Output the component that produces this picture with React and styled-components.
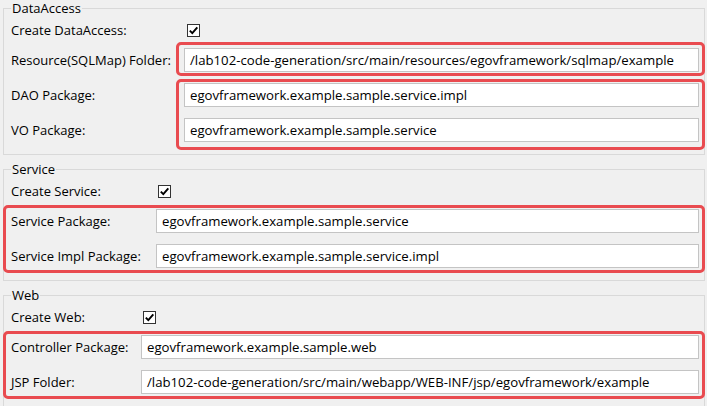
import React from "react";
import styled, { createGlobalStyle } from "styled-components";

const Global = createGlobalStyle`
  html, body { margin: 0; padding: 0; background: #f0f0f0; }
  body { font-family: "Open Sans", "Noto Sans", sans-serif; font-size: 12px; color: #000; overflow: hidden; }
`;

const Page = styled.div`
  display: flex;
  flex-direction: column;
  gap: 6px;
  padding: 0 2px 0 3px;
`;

const Group = styled.fieldset`
  margin: 0;
  min-width: 0;
  border: 1px solid #d9d9d9;
  padding: 7px 5px 12px 7px;
`;

const Legend = styled.legend`
  padding: 0 1px;
  margin-left: 0;
  line-height: 17px;
  font-size: 13px;
  color: #000;
`;

const Form = styled.div`
  display: grid;
  grid-template-columns: ${(p) => p.$labelCol}px 1fr;
  grid-template-rows: 13px;
  grid-auto-rows: 24px;
  row-gap: 11px;
  align-items: center;
`;

const Label = styled.div`
  grid-column: 1;
  grid-row: ${(p) => p.$row};
  font-size: 13px;
  line-height: 17px;
  white-space: nowrap;
  color: #000;
`;

const Field = styled.div`
  grid-column: 2;
  grid-row: ${(p) => p.$row};
  height: 24px;
  box-sizing: border-box;
  background: #fff;
  border: 1px solid #c4c4c4;
  padding: 0 5px;
  display: flex;
  align-items: center;
  font-size: 13.2px;
  white-space: nowrap;
  overflow: hidden;
  color: #000;
`;

const Check = styled.div`
  grid-column: 2;
  grid-row: 1;
  width: 13px;
  height: 13px;
  box-sizing: border-box;
  margin-left: ${(p) => p.$inset}px;
  border: 1px solid #333;
  background: #fff;
  display: flex;
  align-items: center;
  justify-content: center;
`;

const Highlight = styled.div`
  grid-column: ${(p) => p.$col};
  grid-row: ${(p) => p.$row};
  align-self: stretch;
  margin: ${(p) => p.$m};
  border: 3px solid #e94b50;
  border-radius: 5px;
  pointer-events: none;
  z-index: 2;
`;

function Tick() {
  return (
    <svg width="11" height="11" viewBox="0 0 11 11">
      <path d="M1.8 5.6 L4.3 8.2 L9.3 2.4" fill="none" stroke="#000" strokeWidth="1.9" />
    </svg>
  );
}

function Row({ row, label, value }) {
  return (
    <>
      <Label $row={row}>{label}</Label>
      <Field $row={row}>{value}</Field>
    </>
  );
}

export default function App() {
  return (
    <>
      <Global />
      <Page>
        <Group>
          <Legend>DataAccess</Legend>
          <Form $labelCol={173}>
            <Label $row={1}>Create DataAccess:</Label>
            <Check $inset={3}><Tick /></Check>
            <Row row={2} label="Resource(SQLMap) Folder:" value="/lab102-code-generation/src/main/resources/egovframework/sqlmap/example" />
            <Row row={3} label="DAO Package:" value="egovframework.example.sample.service.impl" />
            <Row row={4} label="VO Package:" value="egovframework.example.sample.service" />
            <Highlight $col="2" $row="2" $m="-6px -6px -4px -8px" />
            <Highlight $col="2" $row="3 / 5" $m="-4px -6px -8px -8px" />
          </Form>
        </Group>
        <Group>
          <Legend>Service</Legend>
          <Form $labelCol={145}>
            <Label $row={1}>Create Service:</Label>
            <Check $inset={2}><Tick /></Check>
            <Row row={2} label="Service Package:" value="egovframework.example.sample.service" />
            <Row row={3} label="Service Impl Package:" value="egovframework.example.sample.service.impl" />
            <Highlight $col="1 / 3" $row="2 / 4" $m="-4px -6px -5px -8px" />
          </Form>
        </Group>
        <Group>
          <Legend>Web</Legend>
          <Form $labelCol={130}>
            <Label $row={1}>Create Web:</Label>
            <Check $inset={2}><Tick /></Check>
            <Row row={2} label="Controller Package:" value="egovframework.example.sample.web" />
            <Row row={3} label="JSP Folder:" value="/lab102-code-generation/src/main/webapp/WEB-INF/jsp/egovframework/example" />
            <Highlight $col="1 / 3" $row="2 / 4" $m="-4px -6px -5px -8px" />
          </Form>
        </Group>
      </Page>
    </>
  );
}
